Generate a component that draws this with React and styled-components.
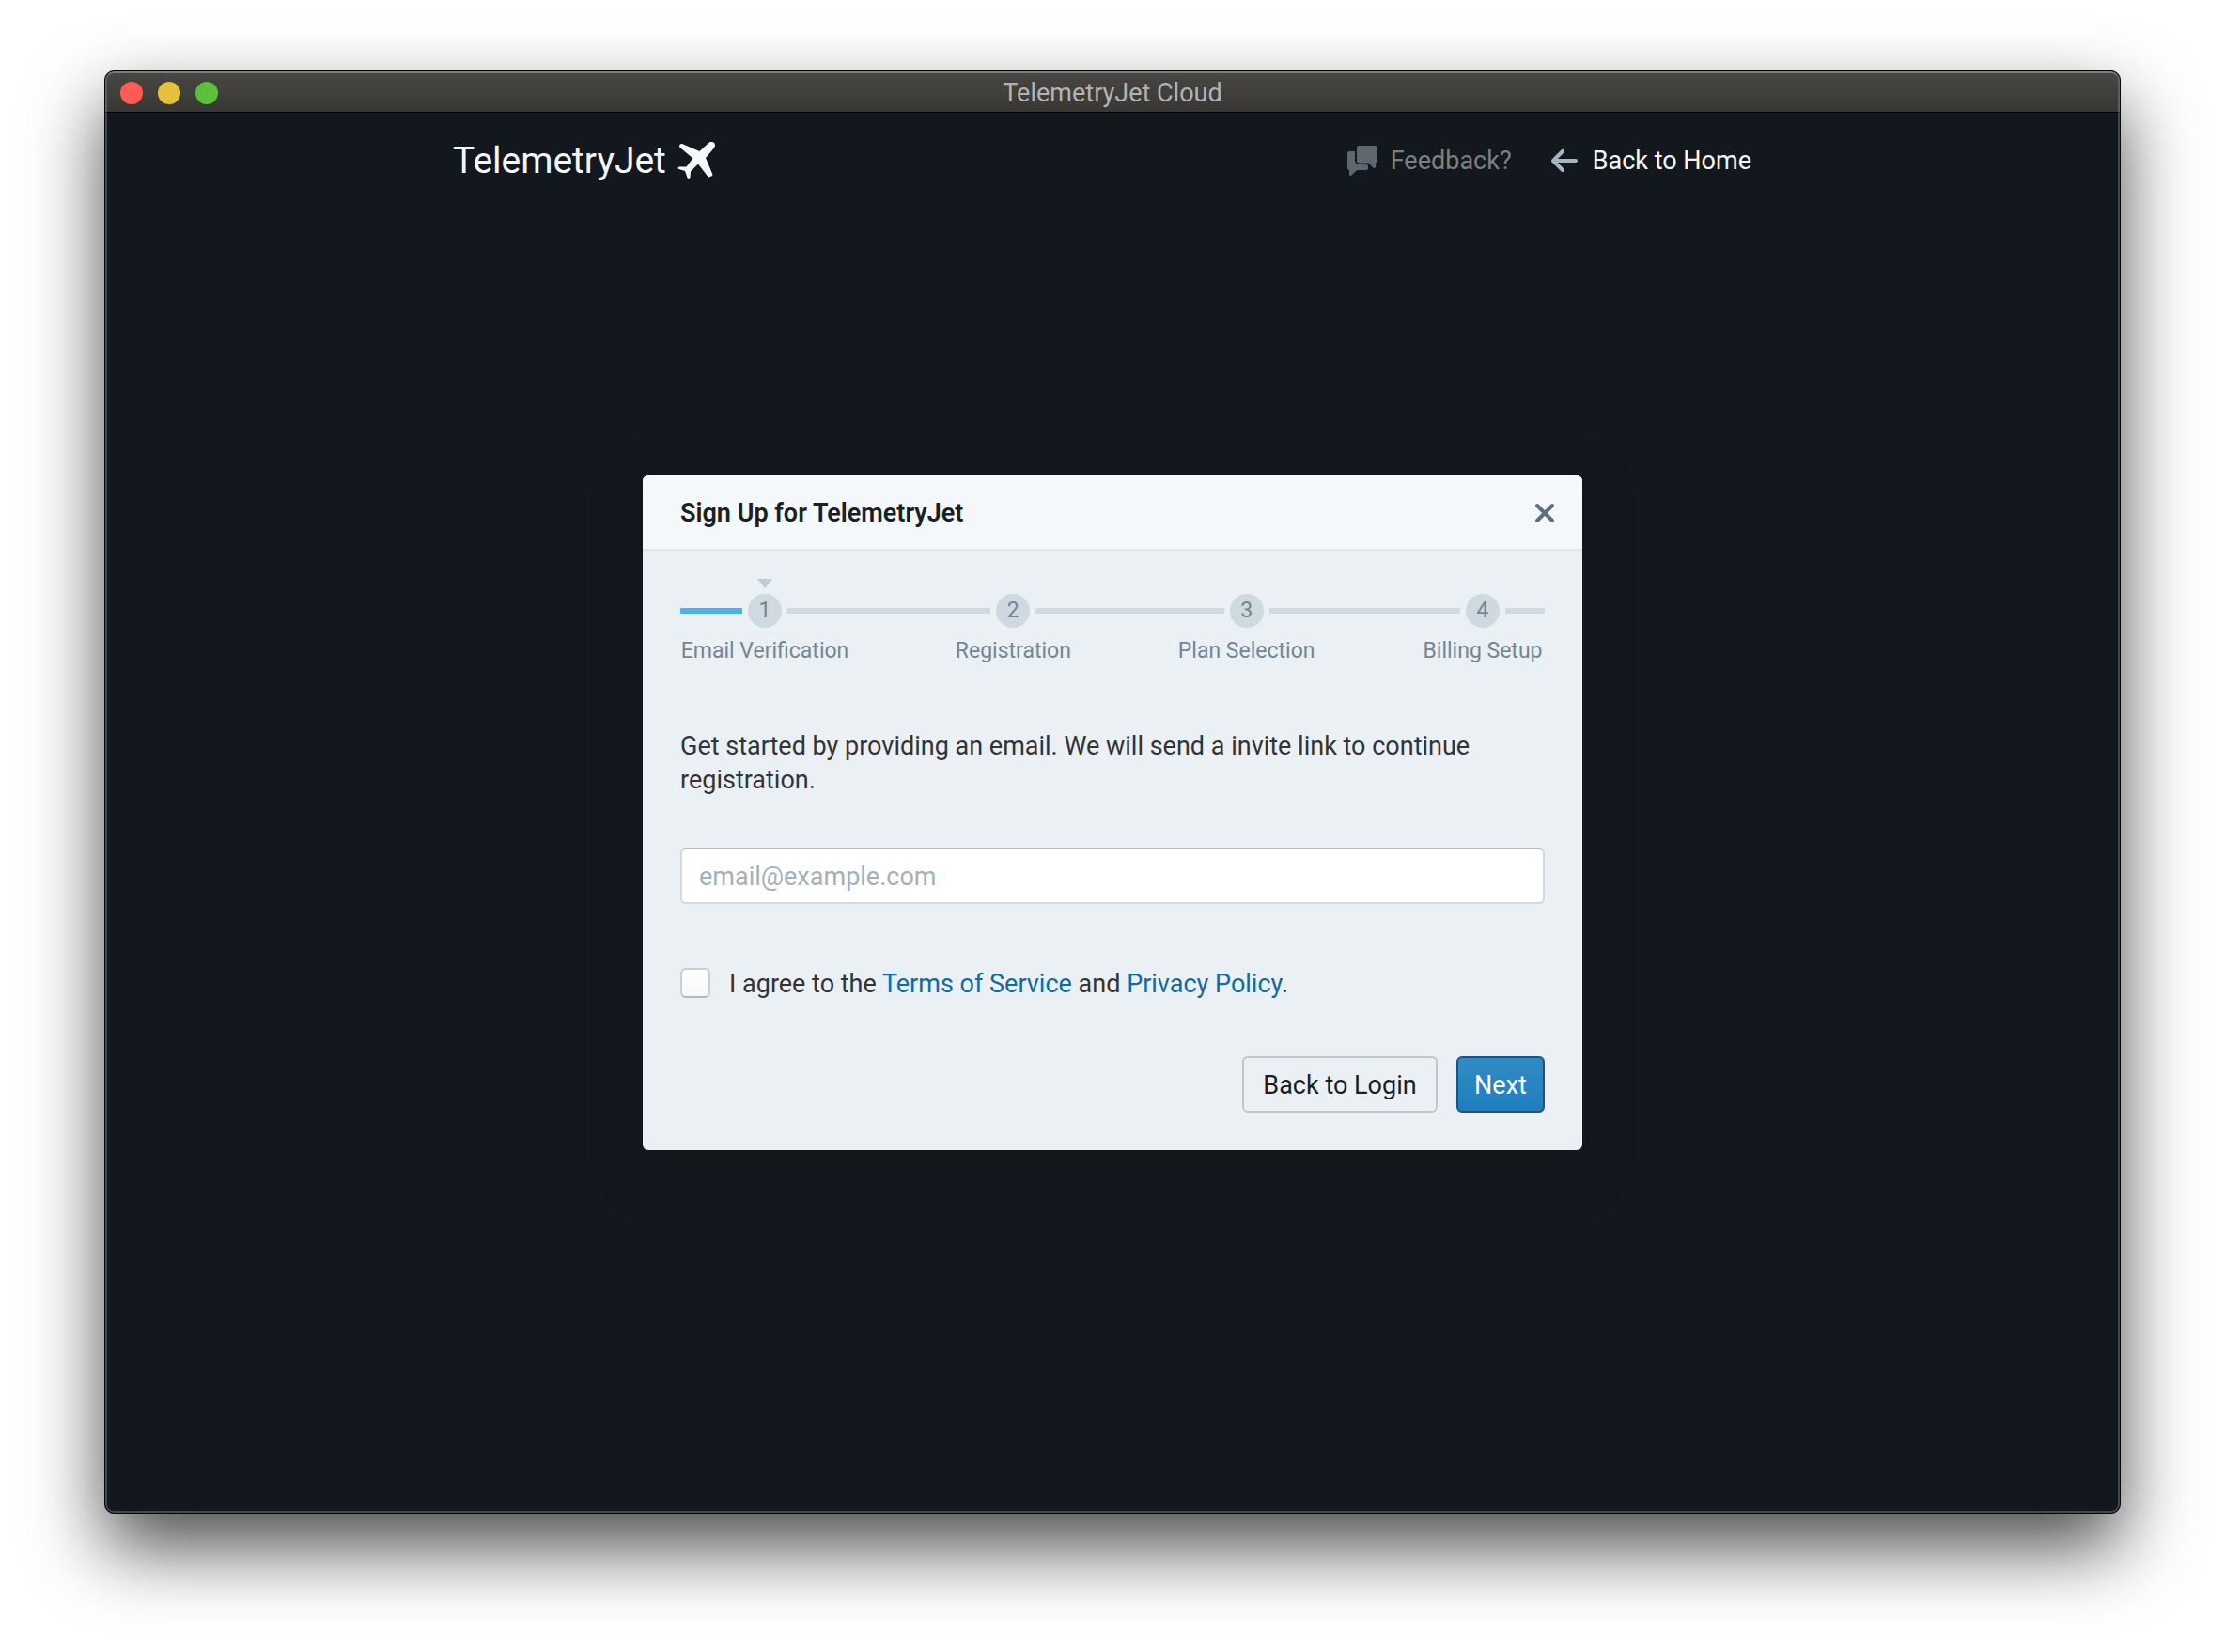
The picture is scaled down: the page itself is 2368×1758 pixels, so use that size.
import React, { useId, useState } from "react";
import styled, { createGlobalStyle } from "styled-components";

const Global = createGlobalStyle`
  *, *::before, *::after { box-sizing: border-box; }
  body { margin: 0; background: #fff; }
  body, button, input { font-family: Roboto, "Liberation Sans", sans-serif; }
`;

const Desktop = styled.div`
  min-height: 100vh;
  padding: 75px 111px 147px;
  display: flex;
`;

const Window = styled.div`
  flex: 1;
  display: flex;
  flex-direction: column;
  overflow: hidden;
  border: 1px solid #060809;
  border-radius: 10px;
  background: #13181f;
  box-shadow: 0 36px 80px rgba(0, 0, 0, 0.7);
`;

const TitleBar = styled.header`
  height: 44px;
  display: grid;
  grid-template-columns: 1fr auto 1fr;
  align-items: center;
  padding: 0 14px;
  background: linear-gradient(#474643, #383734);
  border: 2px solid #5f5f5d;
  border-top-color: #7d7c78;
  border-bottom: 1px solid #000;
  border-radius: 9px 9px 0 0;
`;

const Lights = styled.div`
  display: flex;
  gap: 16px;
`;

const Light = styled.button`
  width: 24px;
  height: 24px;
  padding: 0;
  border: 0;
  border-radius: 50%;
  background: ${(p) => p.$color};
`;

const WindowTitle = styled.span`
  font-size: 27px;
  line-height: 32px;
  color: #b4b3b1;
`;

const Content = styled.div`
  flex: 1;
  display: flex;
  flex-direction: column;
  border: 2px solid #44484c;
  border-top: 0;
  border-radius: 0 0 9px 9px;
`;

const Nav = styled.nav`
  width: 100%;
  max-width: 1440px;
  height: 102px;
  margin: 0 auto;
  padding: 0 40px 0 18px;
  display: flex;
  align-items: center;
  justify-content: space-between;
`;

const Brand = styled.a`
  display: flex;
  align-items: center;
  gap: 12px;
  font-size: 39px;
  line-height: 48px;
  color: #f5f8fa;
  text-decoration: none;
`;

const NavLinks = styled.div`
  display: flex;
  gap: 40px;
`;

const NavLink = styled.a`
  display: flex;
  align-items: center;
  gap: 14px;
  font-size: 27px;
  line-height: 36px;
  color: ${(p) => (p.$muted ? "#7c8084" : "#f5f8fa")};
  text-decoration: none;
  svg { color: ${(p) => (p.$muted ? "#5c6770" : "#a7b6c2")}; }
`;

const Main = styled.main`
  flex: 1;
  display: flex;
  justify-content: center;
  align-items: flex-start;
  padding: 284px 40px 40px;
`;

const Card = styled.section`
  width: 100%;
  max-width: 1000px;
  border-radius: 6px;
  background: #ebf0f4;
  overflow: hidden;
  box-shadow: 0 16px 48px rgba(20, 24, 20, 0.5);
`;

const CardHeader = styled.div`
  height: 80px;
  display: flex;
  align-items: center;
  justify-content: space-between;
  padding: 2px 24px 0 40px;
  background: #f5f8fa;
  border-bottom: 2px solid #dfe6ea;
`;

const CardTitle = styled.h1`
  margin: 0;
  font-size: 27px;
  line-height: 36px;
  font-weight: 600;
  color: #182026;
`;

const CloseButton = styled.button`
  display: flex;
  padding: 0;
  border: 0;
  background: none;
  color: #5c7080;
`;

const Form = styled.form`
  display: flex;
  flex-direction: column;
  padding: 30px 40px 40px;
`;

const Steps = styled.ol`
  display: flex;
  margin: 0;
  padding: 0;
  list-style: none;
  font-size: 23px;
  line-height: 32px;
  color: #738694;
`;

const Step = styled.li`
  width: ${(p) => p.$width}px;
  display: flex;
  flex-direction: column;
  align-items: center;
  white-space: nowrap;
`;

const Pointer = styled.span`
  width: 16px;
  height: 10px;
  margin-bottom: 6px;
  background: ${(p) => (p.$active ? "#bfccd6" : "transparent")};
  clip-path: polygon(0 0, 100% 0, 50% 100%);
`;

const Track = styled.div`
  align-self: stretch;
  display: flex;
  align-items: center;
  gap: 6px;
  margin-bottom: 9px;
`;

const Line = styled.span`
  flex: 1;
  height: 6px;
  background: ${(p) => (p.$done ? "#4db0f0" : "#ced9e0")};
`;

const Connector = styled(Line).attrs({ as: "li" })`
  margin-top: 31px;
`;

const Dot = styled.span`
  width: 36px;
  height: 36px;
  border-radius: 50%;
  background: #ced9e0;
  line-height: 36px;
  text-align: center;
`;

const Intro = styled.p`
  margin: 67px 0 54px;
  font-size: 27px;
  line-height: 36px;
  color: #333;
`;

const EmailInput = styled.input`
  width: 100%;
  height: 60px;
  padding: 1px 18px 0;
  border: 2px solid #d3d8db;
  border-top-color: #b3b8bb;
  border-radius: 6px;
  background: #fff;
  font-size: 27px;
  color: #182026;
  &::placeholder { color: #a3b0ba; opacity: 1; }
`;

const Agreement = styled.div`
  display: flex;
  align-items: center;
  gap: 20px;
  margin: 65px 0 59px;
  font-size: 27px;
  line-height: 36px;
  color: #333;
  label { padding-top: 2px; }
`;

const CheckBox = styled.input`
  appearance: none;
  width: 32px;
  height: 32px;
  margin: 0;
  border: 2px solid #c9cdd0;
  border-bottom-color: #b4b8bb;
  border-radius: 6px;
  background: linear-gradient(#fff, #f6f8fa);
  &:checked { background: #137cbd; }
`;

const TextLink = styled.a`
  color: #106ba3;
  text-decoration: none;
`;

const Actions = styled.div`
  display: flex;
  justify-content: flex-end;
  gap: 20px;
`;

const Button = styled.button`
  height: 60px;
  min-width: ${(p) => (p.$primary ? 94 : 208)}px;
  padding: 2px 16px 0;
  border: 2px solid ${(p) => (p.$primary ? "#1c5480" : "#c1c6ca")};
  border-radius: 6px;
  background: ${(p) => (p.$primary ? "linear-gradient(#338bc4, #1d7fbe)" : "none")};
  font-size: 27px;
  color: ${(p) => (p.$primary ? "#fff" : "#182026")};
`;

const PlaneIcon = () => (
  <svg width="40" height="40" viewBox="0 1 40 40" fill="currentColor" aria-hidden="true">
    <path d="M39 2C37 0 34.500 .800 33 2.300L23.500 11 5 3C3.500 2.500 2 4 2 5.500 2 6.200 2.400 6.700 3 7.200L16.500 18.500 9.500 27.500H2C.500 27.700 0 29.300 1.500 30L8 32 10.500 39C11.200 40.600 13.300 40.200 13.500 38.500L14 32.500 22 24.500 32.500 38C33.300 39.200 37.600 37.300 37.500 35.800L30 18 38.500 8C40.200 6 40.500 3.500 39 2Z" />
  </svg>
);

const ChatIcon = () => (
  <svg width="32" height="32" viewBox="0 0 32 32" fill="currentColor" aria-hidden="true">
    <path d="M8 6H2C.900 6 0 6.900 0 8V24C0 25.100.900 26 2 26V30.500C2 32 3.500 32.500 4.500 31.500L10 26H20C21.100 26 22 25.100 22 24V22C22 20.900 21.100 20 20 20H12C9.800 20 8 18.200 8 16Z" />
    <path d="M12 0H30C31.100 0 32 .900 32 2V16.500C32 17.600 31.100 18.500 30 18.500V22.500C30 24 28.500 24.500 27.500 23.500L22.500 18.500H12C10.900 18.500 10 17.600 10 16.500V2C10 .900 10.900 0 12 0Z" />
  </svg>
);

const ArrowIcon = () => (
  <svg width="32" height="32" viewBox="0 0 16 16" fill="currentColor" aria-hidden="true">
    <path d="M13.990 6.990H4.410L7.700 3.700a1.003 1.003 0 0 0-1.420-1.420l-5 5a1.014 1.014 0 0 0 0 1.420l5 5a1.003 1.003 0 0 0 1.420-1.420L4.410 8.990H14c.55 0 1-.45 1-1s-.46-1-1.010-1z" />
  </svg>
);

const CloseIcon = () => (
  <svg width="32" height="32" viewBox="0 0 32 32" fill="none" stroke="currentColor" strokeWidth="4" strokeLinecap="round" aria-hidden="true">
    <path d="M8 8 24 24M24 8 8 24" />
  </svg>
);

const steps = [
  { label: "Email Verification", width: 180 },
  { label: "Registration", width: 126 },
  { label: "Plan Selection", width: 148 },
  { label: "Billing Setup", width: 132 },
];

const StepList = () => (
  <Steps>
    {steps.map((step, i) => (
      <React.Fragment key={step.label}>
        {i > 0 && <Connector aria-hidden="true" />}
        <Step $width={step.width} aria-current={i === 0 ? "step" : undefined}>
          <Pointer $active={i === 0} />
          <Track>
            <Line $done={i === 0} />
            <Dot>{i + 1}</Dot>
            <Line />
          </Track>
          {step.label}
        </Step>
      </React.Fragment>
    ))}
  </Steps>
);

export default function App() {
  const agreeId = useId();
  const [email, setEmail] = useState("");
  return (
    <>
      <Global />
      <Desktop>
        <Window>
          <TitleBar>
            <Lights>
              <Light $color="#ff5c58" aria-label="Close window" />
              <Light $color="#e6c03d" aria-label="Minimize window" />
              <Light $color="#5ac23a" aria-label="Zoom window" />
            </Lights>
            <WindowTitle>TelemetryJet Cloud</WindowTitle>
          </TitleBar>
          <Content>
            <Nav>
              <Brand href="#home">
                TelemetryJet
                <PlaneIcon />
              </Brand>
              <NavLinks>
                <NavLink href="#feedback" $muted>
                  <ChatIcon />
                  Feedback?
                </NavLink>
                <NavLink href="#home">
                  <ArrowIcon />
                  Back to Home
                </NavLink>
              </NavLinks>
            </Nav>
            <Main>
              <Card>
                <CardHeader>
                  <CardTitle>Sign Up for TelemetryJet</CardTitle>
                  <CloseButton aria-label="Close">
                    <CloseIcon />
                  </CloseButton>
                </CardHeader>
                <Form onSubmit={(e) => e.preventDefault()}>
                  <StepList />
                  <Intro>
                    Get started by providing an email. We will send a invite link to continue
                    registration.
                  </Intro>
                  <EmailInput
                    type="email"
                    aria-label="Email"
                    placeholder="email@example.com"
                    value={email}
                    onChange={(e) => setEmail(e.target.value)}
                  />
                  <Agreement>
                    <CheckBox type="checkbox" id={agreeId} />
                    <label htmlFor={agreeId}>
                      I agree to the <TextLink href="#terms">Terms of Service</TextLink> and{" "}
                      <TextLink href="#privacy">Privacy Policy</TextLink>.
                    </label>
                  </Agreement>
                  <Actions>
                    <Button type="button">Back to Login</Button>
                    <Button type="submit" $primary>Next</Button>
                  </Actions>
                </Form>
              </Card>
            </Main>
          </Content>
        </Window>
      </Desktop>
    </>
  );
}
